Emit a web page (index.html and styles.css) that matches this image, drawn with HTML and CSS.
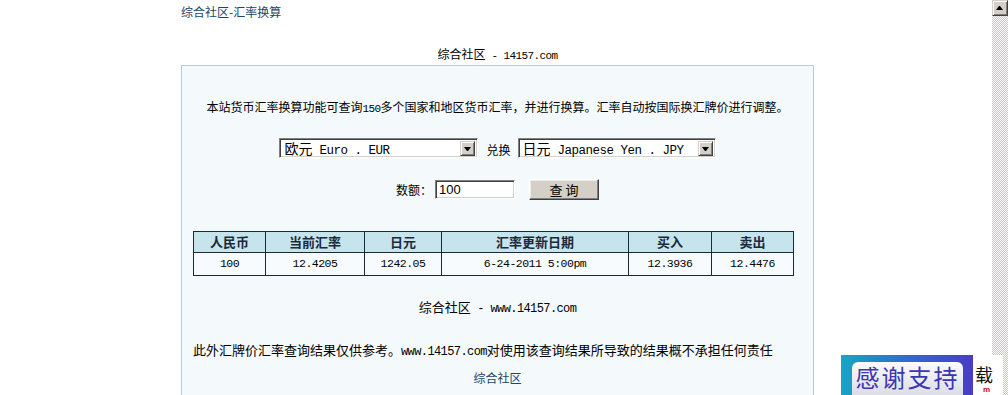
FILE: index.html
```html
<!DOCTYPE html>
<html lang="zh-CN">
<head>
<meta charset="utf-8">
<title>综合社区-汇率换算</title>
<link rel="stylesheet" href="styles.css">
</head>
<body>
<div class="window">
  <div class="page">
    <div class="title">综合社区-汇率换算</div>
    <div class="wrap">
      <div class="site">综合社区<span class="en"> - 14157.com</span></div>
      <div class="box">
        <p class="intro">本站货币汇率换算功能可查询<span class="en">150</span>多个国家和地区货币汇率，并进行换算。汇率自动按国际换汇牌价进行调整。</p>
        <div class="pick">
          <div class="combo w1" role="combobox"><span class="val">欧元<span class="en"> Euro . EUR</span></span><span class="arrow"></span></div>
          <span class="conv">兑换</span>
          <div class="combo w2" role="combobox"><span class="val">日元<span class="en"> Japanese Yen . JPY</span></span><span class="arrow"></span></div>
        </div>
        <div class="amount">
          <label class="lbl">数额：</label><input class="num" value="100"><button class="btn">查 询</button>
        </div>
        <table class="rates">
          <colgroup><col class="c1"><col class="c2"><col class="c3"><col class="c4"><col class="c5"><col class="c6"></colgroup>
          <tr><th>人民币</th><th>当前汇率</th><th>日元</th><th>汇率更新日期</th><th>买入</th><th>卖出</th></tr>
          <tr><td>100</td><td>12.4205</td><td>1242.05</td><td>6-24-2011 5:00pm</td><td>12.3936</td><td>12.4476</td></tr>
        </table>
        <div class="foot">综合社区<span class="en"> - www.14157.com</span></div>
        <div class="note">此外汇牌价汇率查询结果仅供参考。<span class="en">www.14157.com</span>对使用该查询结果所导致的结果概不承担任何责任</div>
        <div class="bottom">综合社区</div>
      </div>
    </div>
  </div>
  <div class="scrollbar"><div class="sb-up"></div></div>
  <div class="ad">
    <div class="ad-blue"><div class="ad-chip">感谢支持</div></div>
    <div class="ad-side"><span class="ad-char">载</span><span class="ad-red">m</span></div>
  </div>
</div>
</body>
</html>
```
FILE: styles.css
```css
body {
  margin: 0;
  font-family: "Noto Sans CJK SC", sans-serif;
  font-size: 12px;
  color: #000;
  background: #fff;
}
.window {
  display: flex;
  height: 395px;
  overflow: hidden;
  position: relative;
}
.page {
  flex: 1;
  min-width: 0;
}
.en {
  font-family: "Liberation Mono", monospace;
  font-size: 11px;
  letter-spacing: -0.6px;
  line-height: 1;
}
.title {
  margin-top: 4px;
  padding-left: 181px;
  height: 16px;
  line-height: 16px;
  color: #1e4466;
}
.wrap {
  width: 633px;
  margin-left: 181px;
}
.site {
  text-align: center;
  height: 16px;
  line-height: 16px;
  margin-top: 26px;
}
.box {
  margin-top: 3px;
  border: 1px solid #b9ccd8;
  background: #f4f9fc;
  padding: 33px 0 30px;
  display: flex;
  flex-direction: column;
}
.intro {
  margin: 0;
  text-align: center;
  height: 16px;
  line-height: 16px;
}
.pick {
  display: flex;
  justify-content: center;
  align-items: flex-end;
  margin-top: 23px;
  height: 20px;
}
.combo {
  height: 20px;
  flex: none;
  box-sizing: border-box;
  border: 1px solid;
  border-color: #808080 #fff #fff #808080;
  box-shadow: inset 1px 1px #404040, inset -1px -1px #d4d0c8;
  background: #fff;
  display: flex;
  align-items: center;
  padding: 0 2px 0 4px;
  font-size: 14px;
}
.w1 { width: 199px; }
.w2 { width: 198px; }
.combo .val {
  flex: 1;
  height: 18px;
  line-height: 18px;
  white-space: nowrap;
}
.combo .en {
  font-size: 12.5px;
  letter-spacing: -0.5px;
}
.arrow {
  width: 15px;
  height: 15px;
  flex: none;
  box-sizing: border-box;
  background: #d4d0c8;
  border: 1px solid;
  border-color: #d4d0c8 #404040 #404040 #d4d0c8;
  box-shadow: inset 1px 1px #fff, inset -1px -1px #808080;
  position: relative;
}
.arrow::after {
  content: "";
  position: absolute;
  left: 3px;
  top: 5px;
  width: 1px;
  border-left: 3px solid transparent;
  border-right: 3px solid transparent;
  border-top: 4px solid #000;
}
.conv {
  margin: 0 7px 0 8px;
  height: 16px;
  line-height: 16px;
}
.amount {
  display: flex;
  justify-content: center;
  align-items: center;
  margin-top: 21px;
  height: 21px;
}
.lbl { margin-right: 3px; line-height: 16px; }
.num {
  width: 80px;
  height: 19px;
  box-sizing: border-box;
  border: 1px solid;
  border-color: #808080 #fff #fff #808080;
  box-shadow: inset 1px 1px #404040, inset -1px -1px #d4d0c8;
  padding: 0 3px;
  margin: 0 14px 0 0;
  font: 13px "Liberation Sans", sans-serif;
  color: #000;
  background: #fff;
}
.btn {
  width: 70px;
  height: 21px;
  padding: 0;
  background: #d4d0c8;
  border: 1px solid;
  border-color: #fff #404040 #404040 #fff;
  box-shadow: inset -1px -1px #808080, inset 1px 1px #ecebe6;
  font: 13px/17px "Noto Sans CJK SC", sans-serif;
  color: #000;
}
.rates {
  margin: 31px 0 0 11px;
  width: 600px;
  border-collapse: collapse;
  table-layout: fixed;
}
.c1 { width: 72px; }
.c2 { width: 99px; }
.c3 { width: 77px; }
.c4 { width: 187px; }
.c5 { width: 83px; }
.c6 { width: 82px; }
.rates th, .rates td {
  border: 1px solid #1c2a36;
  text-align: center;
  padding: 0;
}
.rates th {
  height: 20px;
  background: #c6e4ec;
  font-size: 13px;
  font-weight: bold;
  color: #1a2a3a;
  line-height: 16px;
}
.rates td {
  height: 22px;
  background: #f7fbfd;
  font-family: "Liberation Mono", monospace;
  font-size: 11.5px;
  letter-spacing: -0.5px;
  line-height: 14px;
}
.foot {
  margin-top: 23px;
  text-align: center;
  height: 16px;
  line-height: 16px;
  font-size: 13px;
}
.foot .en, .note .en {
  font-size: 12px;
  letter-spacing: -0.6px;
}
.note {
  margin: 27px 0 0 11px;
  font-size: 13px;
  height: 16px;
  line-height: 16px;
  white-space: nowrap;
}
.bottom {
  margin-top: 12px;
  text-align: center;
  height: 16px;
  line-height: 16px;
  color: #1e4466;
}
.scrollbar {
  width: 16px;
  flex: none;
  background: repeating-conic-gradient(#c8c4bc 0 25%, #fff 0 50%) 0 0 / 2px 2px;
}
.sb-up {
  height: 16px;
  box-sizing: border-box;
  background: #d4d0c8;
  border: 1px solid;
  border-color: #d4d0c8 #404040 #404040 #d4d0c8;
  box-shadow: inset 1px 1px #fff, inset -1px -1px #808080;
  position: relative;
}
.sb-up::after {
  content: "";
  position: absolute;
  left: 3px;
  top: 5px;
  width: 1px;
  border-left: 3px solid transparent;
  border-right: 3px solid transparent;
  border-bottom: 4px solid #000;
}
.ad {
  position: absolute;
  left: 841px;
  top: 355px;
  height: 40px;
  display: flex;
}
.ad-blue {
  width: 132px;
  box-sizing: border-box;
  padding: 7px 10px 0 11px;
  background: linear-gradient(90deg, #16a6c4, #2f6ccc 50%, #4a3cc4);
}
.ad-chip {
  height: 40px;
  border-radius: 6px;
  background: linear-gradient(#fbfbfd, #d6d6e2);
  color: #3b37b0;
  font-size: 24px;
  line-height: 30px;
  text-align: center;
  letter-spacing: 2px;
}
.ad-side {
  width: 30px;
  background: #fff;
  position: relative;
  padding: 9px 0 0 2px;
  box-sizing: border-box;
}
.ad-char {
  display: block;
  font-size: 18px;
  height: 20px;
  line-height: 20px;
  color: #111;
}
.ad-red {
  position: absolute;
  left: 10px;
  top: 30px;
  font: bold 8px/9px "Liberation Sans", sans-serif;
  color: #c01010;
}
```
